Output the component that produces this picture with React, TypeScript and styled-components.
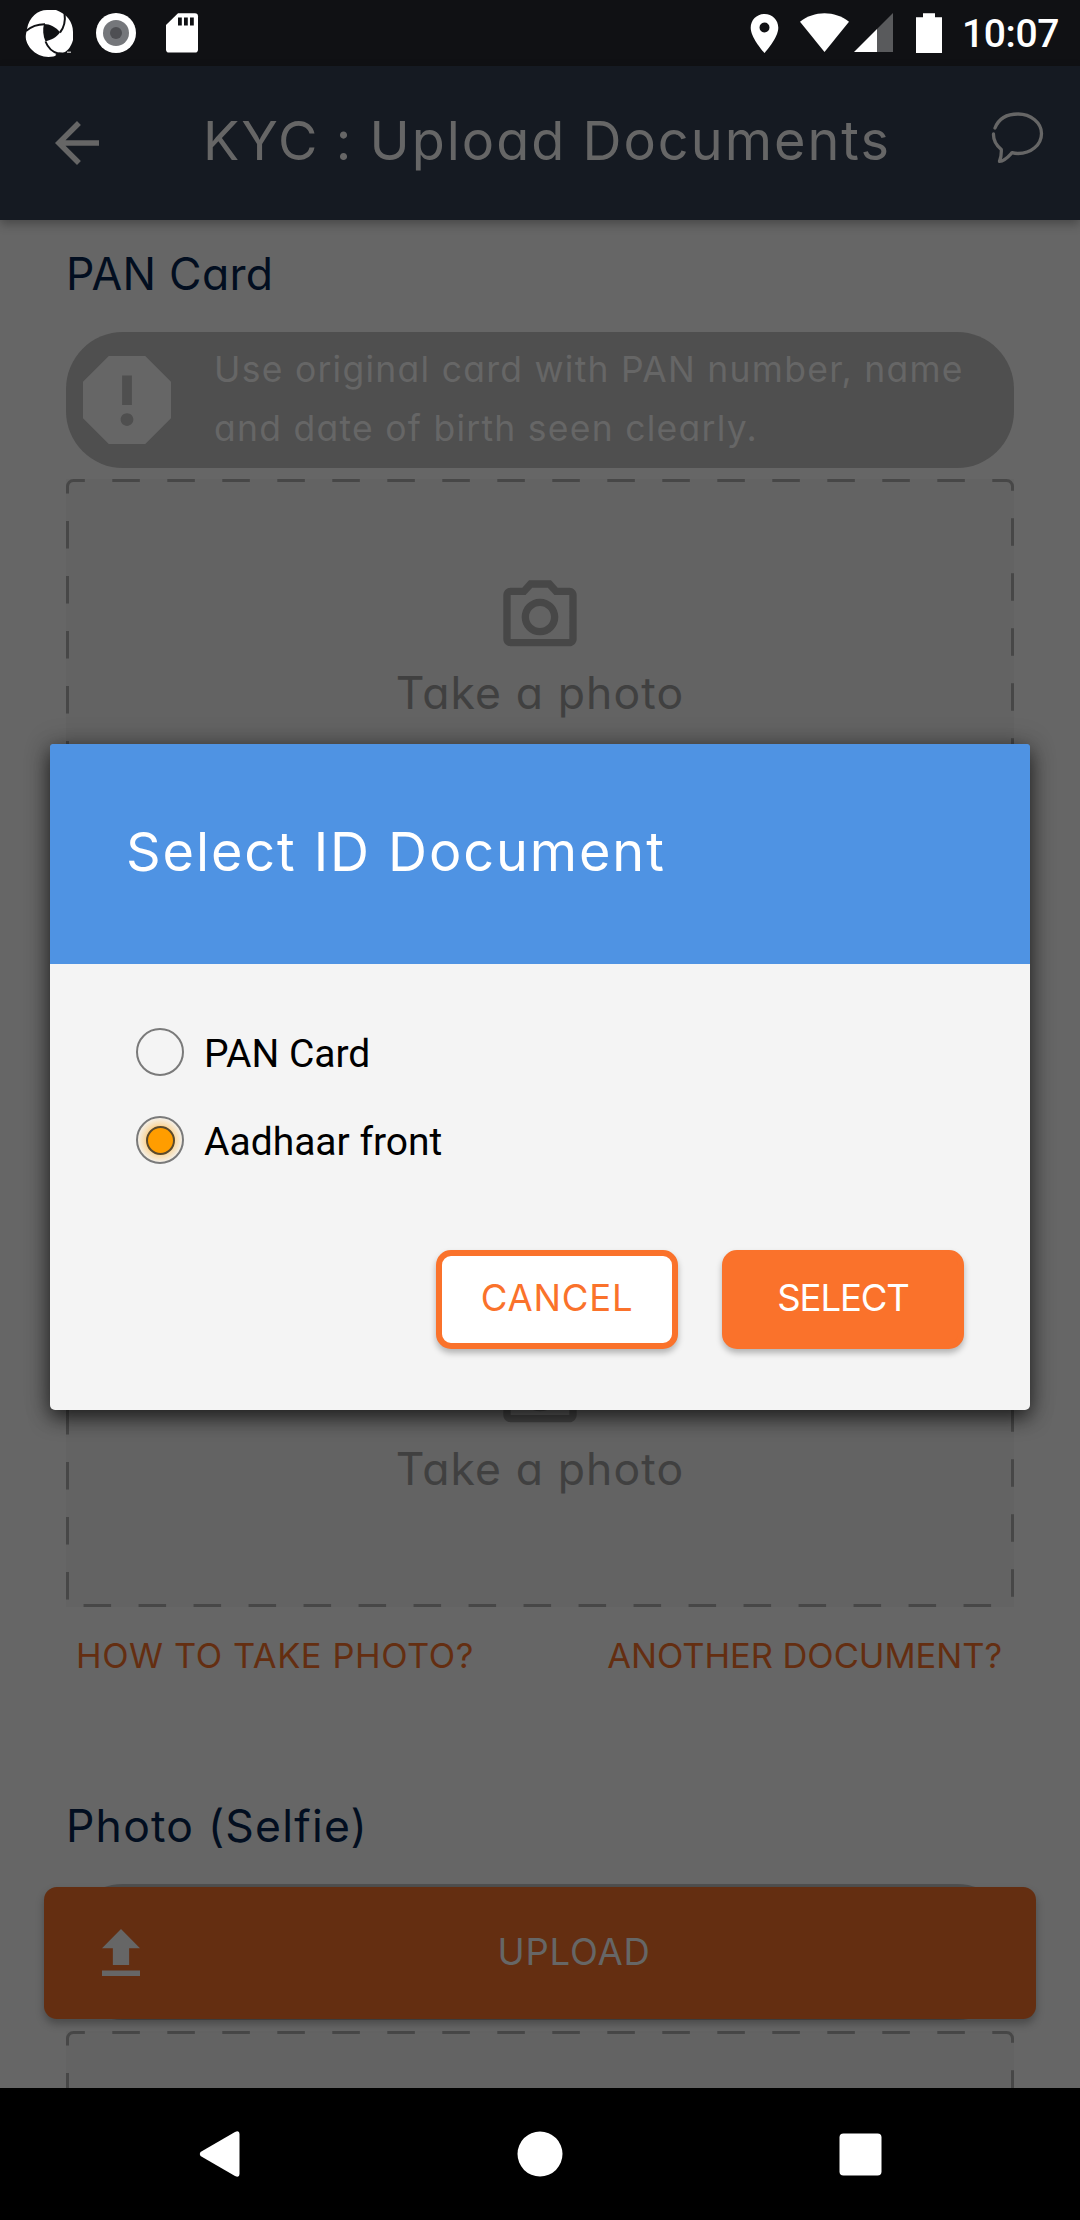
import React from 'react';
import styled, { createGlobalStyle } from 'styled-components';
import { MdArrowBack } from 'react-icons/md';

const GlobalStyle = createGlobalStyle`
  *, *::before, *::after { box-sizing: border-box; }
  body { margin: 0; background: #000; }
  h1, h2, p { margin: 0; font-weight: 400; }
  button { margin: 0; padding: 0; border: 0; background: none; font: inherit; }
  svg { display: block; flex: none; }
`;

const Screen = styled.div`
  position: relative;
  display: flex;
  flex-direction: column;
  width: 1080px;
  height: 2220px;
  overflow: hidden;
  background: #666;
  color: #666;
  font-family: Inter, 'Open Sans', sans-serif;
  font-feature-settings: 'cv11';
  white-space: nowrap;
`;

const StatusBar = styled.div`
  flex: none;
  display: flex;
  justify-content: space-between;
  align-items: flex-start;
  height: 66px;
  padding: 0 21px 0 24px;
  background: #101114;
`;

const StatusGroup = styled.div`
  display: flex;
  align-items: flex-start;
`;

const Clock = styled.span`
  padding-left: 19px;
  font-family: Roboto, sans-serif;
  font-size: 39px;
  font-weight: 500;
  line-height: 69px;
  letter-spacing: -0.4px;
  color: #fff;
`;

const AppBar = styled.header`
  position: relative;
  z-index: 1;
  flex: none;
  display: flex;
  align-items: center;
  height: 154px;
  padding: 0 35px 0 55px;
  background: #151a22;
  box-shadow: 0 4px 10px rgba(0, 0, 0, 0.3);
`;

const AppTitle = styled.h1`
  flex: 1;
  padding: 0 0 5px 104px;
  font-size: 54px;
  line-height: 70px;
  letter-spacing: 2px;
  word-spacing: -1px;
`;

const ChatButton = styled.button`
  align-self: flex-start;
  padding-top: 42px;
  color: #666;
`;

const Content = styled.main`
  flex: 1;
  min-height: 0;
  overflow: hidden;
  padding: 0 66px;
`;

const Section = styled.section`
  display: flex;
  flex-direction: column;
  height: 776px;
`;

const SectionTitle = styled.h2<{ $tracking: number }>`
  flex: none;
  height: 112px;
  padding-top: 24px;
  font-size: 44.5px;
  line-height: 60px;
  letter-spacing: ${p => p.$tracking}px;
  color: #020e20;
`;

const Hint = styled.div`
  flex: none;
  display: flex;
  align-items: center;
  gap: 43px;
  height: 136px;
  padding-left: 17px;
  border-radius: 57px;
  background: #4f4f4f;
`;

const HintText = styled.p`
  padding-bottom: 3px;
  font-size: 35.5px;
  line-height: 59px;
  letter-spacing: 1.26px;
`;

const CaptureBox = styled.div`
  position: relative;
  flex: none;
  display: flex;
  flex-direction: column;
  align-items: center;
  gap: 2px;
  height: 352px;
  margin-top: 11px;
  padding-top: 94px;
  background: #636363;
  color: #404040;
`;

const DashedFrame = styled.svg`
  position: absolute;
  inset: 0;
`;

const CaptureLabel = styled.span`
  font-size: 44.5px;
  line-height: 60px;
  letter-spacing: 1.1px;
`;

const LinkRow = styled.div`
  display: flex;
  justify-content: space-between;
  padding: 19px 12px 0 10px;
`;

const LinkButton = styled.button<{ $tracking: number }>`
  font-size: 34.5px;
  line-height: 60px;
  letter-spacing: ${p => p.$tracking}px;
  color: #642e11;
`;

const UploadButton = styled.button`
  position: absolute;
  left: 44px;
  right: 44px;
  bottom: 201px;
  display: flex;
  align-items: center;
  height: 132px;
  padding: 0 28px 2px 58px;
  border-radius: 13px;
  background: #642e11;
  color: #666;
  box-shadow: 0 5px 8px rgba(0, 0, 0, 0.28);
`;

const UploadLabel = styled.span`
  flex: 1;
  text-align: center;
  font-size: 36.5px;
  line-height: 60px;
  letter-spacing: 0.8px;
`;

const NavBar = styled.nav`
  flex: none;
  display: grid;
  grid-template-columns: repeat(3, 320px);
  justify-content: center;
  align-items: center;
  justify-items: center;
  height: 132px;
  background: #000;
`;

const Dialog = styled.div`
  position: absolute;
  left: 50px;
  right: 50px;
  top: 744px;
  z-index: 2;
  display: flex;
  flex-direction: column;
  height: 666px;
  border-radius: 5px;
  background: #f4f4f4;
  box-shadow: 0 8px 20px rgba(0, 0, 0, 0.62), 0 0 26px rgba(0, 0, 0, 0.25);
`;

const DialogHeader = styled.div`
  display: flex;
  align-items: center;
  height: 220px;
  padding: 0 76px 5px;
  border-radius: 3px 3px 0 0;
  background: #4f93e3;
  color: #fff;
`;

const DialogTitle = styled.h2`
  font-size: 54px;
  line-height: 70px;
  letter-spacing: 1.9px;
`;

const Options = styled.div`
  display: flex;
  flex-direction: column;
  padding: 44px 86px 0;
`;

const Option = styled.div`
  display: flex;
  align-items: center;
  gap: 20px;
  height: 88px;
`;

const Radio = styled.span<{ $checked?: boolean }>`
  display: grid;
  place-items: center;
  width: 48px;
  height: 48px;
  border: 2px solid #7a7a7a;
  border-radius: 50%;
  background: ${p => (p.$checked ? 'radial-gradient(circle closest-side, #ffc877 55%, #f8dcae 72%, #f4efe6 100%)' : 'transparent')};
`;

const RadioDot = styled.span`
  width: 29px;
  height: 29px;
  border: 2px solid #5b4a2c;
  border-radius: 50%;
  background: #ff9d00;
`;

const OptionLabel = styled.span`
  padding-top: 3px;
  font-family: Roboto, sans-serif;
  font-size: 39px;
  line-height: 50px;
  color: #000;
`;

const Actions = styled.div`
  display: flex;
  justify-content: flex-end;
  gap: 44px;
  padding: 66px 66px 0;
`;

const ActionButton = styled.button<{ $filled?: boolean; $tracking: number }>`
  width: 242px;
  height: 99px;
  padding-bottom: 3px;
  border: 6px solid #fa722b;
  border-radius: 15px;
  background: ${p => (p.$filled ? '#fa722b' : '#fff')};
  color: ${p => (p.$filled ? '#fff' : '#fa722b')};
  font-size: 36.5px;
  letter-spacing: ${p => p.$tracking}px;
  box-shadow: 0 4px 6px rgba(0, 0, 0, 0.27);
`;

function SwirlLogo() {
  return (
    <svg width="52" height="66" viewBox="24 0 52 66">
      <path d="M27 29C29 17 38 10 47 10H56C67 14 73 22 73 32V40C71 47 68 50 65 52L58 55C49 59 38 57 31 49C27 44 25 39 26 34Z" fill="#fff" />
      <path d="M44 24C50 24 56 27 60 32.500C57 37 51 40 45.500 41.500C43 36 42.500 29 44 24Z" fill="#101114" />
      <g fill="none" stroke="#101114">
        <path d="M26 31C32 26 38 24.200 45 24.300" strokeWidth="2" />
        <path d="M64.500 13C65.500 20 64.500 27 60 32.500" strokeWidth="2" />
        <path d="M45.500 41.500C48 48 53 52 58 53.500" strokeWidth="2" />
        <path d="M56 56L59 53.500L65 54" strokeWidth="2.400" />
      </g>
      <path d="M67 51.500H71V53H67Z" fill="#aaa" />
    </svg>
  );
}

function RecordIcon() {
  return (
    <svg width="88" height="66" viewBox="76 0 88 66">
      <circle cx="116" cy="33" r="20" fill="#fff" />
      <circle cx="116" cy="33" r="13" fill="#75777b" />
      <circle cx="116" cy="33" r="6" fill="#4e4f53" />
    </svg>
  );
}

function SdCardIcon() {
  return (
    <svg width="40" height="66" viewBox="164 0 40 66">
      <path d="M178 13.200H195Q198 13.200 198 16.200V49.500Q198 52.600 195 52.600H169Q166 52.600 166 49.500V25Z" fill="#fff" />
      <path d="M178 17.500h3.800v8h-3.800zM184 17.500h3.800v8h-3.800zM190 17.500h3.800v8h-3.800z" fill="#101114" />
    </svg>
  );
}

function SystemIcons() {
  return (
    <svg width="194" height="66" viewBox="748 0 194 66">
      <g fill="#fff">
        <path fillRule="evenodd" d="M763.500 14C755.800 14 749.700 20 749.700 27.700C749.700 38 763.500 53 763.500 53S777.300 38 777.300 27.700C777.300 20 771.200 14 763.500 14ZM763.500 22.500a5 5 0 1 1 0 10a5 5 0 0 1 0-10Z" />
        <path d="M799 21.800C813 10.300 834 10.300 848 21.800L823.500 52Z" />
        <path d="M853 52L876 29V52Z" />
        <path d="M922 13.300H934V17.300H941V53H915V17.300H922Z" />
      </g>
      <path d="M876 29L892 13V52H876Z" fill="#595a5c" />
    </svg>
  );
}

function ChatIcon() {
  return (
    <svg width="56" height="58" viewBox="0 0 56 58" fill="none" stroke="currentColor" strokeWidth="3.300" strokeLinecap="round" strokeLinejoin="round">
      <path d="M6 20C10 10 19 6 29 6C42 6 52.500 15 52.500 25.500C52.500 37 42 45.500 29 45.500Q26 45.500 23 44.700C20 48 16 53 10.500 53.300C12 50 12.500 46 12.300 41.500C7 37 4.300 31 4.500 26" />
    </svg>
  );
}

function AlertIcon() {
  return (
    <svg width="88" height="88" viewBox="3 3 18 18" fill="#666">
      <path d="M15.730 3H8.270L3 8.270v7.460L8.270 21h7.460L21 15.730V8.270L15.730 3zM12 17.300c-.720 0-1.300-.580-1.300-1.300 0-.720.580-1.300 1.300-1.300.720 0 1.300.580 1.300 1.300 0 .720-.580 1.300-1.300 1.300zm1-4.300h-2V7h2v6z" />
    </svg>
  );
}

function CameraIcon() {
  return (
    <svg width="88" height="88" viewBox="0 0 24 24" fill="#474747">
      <path d="M14.120 4l1.830 2H20v12H4V6h4.050l1.830-2h4.240M15 2H9L7.170 4H4c-1.100 0-2 .900-2 2v12c0 1.100.900 2 2 2h16c1.100 0 2-.900 2-2V6c0-1.100-.900-2-2-2h-3.170L15 2zm-3 7c1.650 0 3 1.350 3 3s-1.350 3-3 3-3-1.350-3-3 1.350-3 3-3m0-2c-2.760 0-5 2.240-5 5s2.240 5 5 5 5-2.240 5-5-2.240-5-5-5z" />
    </svg>
  );
}

function Capture({ children }: { children?: React.ReactNode }) {
  return (
    <CaptureBox>
      <DashedFrame width="948" height="352" viewBox="0 0 948 352" fill="none" stroke="#474747" strokeWidth="3" strokeDasharray="27.500 27.500">
        <path d="M1.500 344.500V7.500A6 6 0 0 1 7.500 1.500H940.500A6 6 0 0 1 946.500 7.500V344.500A6 6 0 0 1 940.500 350.500H7.500" />
      </DashedFrame>
      {children}
    </CaptureBox>
  );
}

interface DocumentSectionProps {
  title?: string;
  tracking?: number;
  hint?: React.ReactNode;
  prompt?: string;
  links?: boolean;
}

function DocumentSection({ title, tracking = 0, hint, prompt, links }: DocumentSectionProps) {
  return (
    <Section>
      <SectionTitle $tracking={tracking}>{title}</SectionTitle>
      <Hint>
        {hint && <AlertIcon />}
        {hint && <HintText>{hint}</HintText>}
      </Hint>
      <Capture>
        {prompt && <CameraIcon />}
        {prompt && <CaptureLabel>{prompt}</CaptureLabel>}
      </Capture>
      {links && (
        <LinkRow>
          <LinkButton $tracking={0.55}>HOW TO TAKE PHOTO?</LinkButton>
          <LinkButton $tracking={-0.05}>ANOTHER DOCUMENT?</LinkButton>
        </LinkRow>
      )}
    </Section>
  );
}

export default function App() {
  return (
    <Screen>
      <GlobalStyle />
      <StatusBar>
        <StatusGroup>
          <SwirlLogo />
          <RecordIcon />
          <SdCardIcon />
        </StatusGroup>
        <StatusGroup>
          <SystemIcons />
          <Clock>10:07</Clock>
        </StatusGroup>
      </StatusBar>
      <AppBar>
        <MdArrowBack size={44} viewBox="4 4 16 16" />
        <AppTitle>KYC : Upload Documents</AppTitle>
        <ChatButton>
          <ChatIcon />
        </ChatButton>
      </AppBar>
      <Content>
        <DocumentSection
          title="PAN Card"
          tracking={0.3}
          hint={<>Use original card with PAN number, name<br />and date of birth seen clearly.</>}
          prompt="Take a photo"
        />
        <DocumentSection prompt="Take a photo" links />
        <DocumentSection title="Photo (Selfie)" tracking={1.2} />
      </Content>
      <UploadButton>
        <svg width="38" height="47" viewBox="5 3 14 17" preserveAspectRatio="none" fill="currentColor">
          <path d="M9 16h6v-6h4l-7-7-7 7h4zm-4 2h14v2H5z" />
        </svg>
        <UploadLabel>UPLOAD</UploadLabel>
      </UploadButton>
      <NavBar>
        <svg width="42" height="48" viewBox="0 0 42 48" fill="#fff">
          <path d="M1.500 22Q0 24 1.500 26L36 46Q40.500 48 40.500 44V4Q40.500 0 36 2Z" />
        </svg>
        <svg width="46" height="46" viewBox="0 0 46 46" fill="#fff">
          <circle cx="23" cy="23" r="22.500" />
        </svg>
        <svg width="43" height="43" viewBox="0 0 43 43" fill="#fff">
          <rect x="0.500" y="0.500" width="42" height="42" rx="4" />
        </svg>
      </NavBar>
      <Dialog role="dialog">
        <DialogHeader>
          <DialogTitle>Select ID Document</DialogTitle>
        </DialogHeader>
        <Options>
          <Option>
            <Radio />
            <OptionLabel>PAN Card</OptionLabel>
          </Option>
          <Option>
            <Radio $checked>
              <RadioDot />
            </Radio>
            <OptionLabel>Aadhaar front</OptionLabel>
          </Option>
        </Options>
        <Actions>
          <ActionButton $tracking={0.8}>CANCEL</ActionButton>
          <ActionButton $filled $tracking={-1.1}>SELECT</ActionButton>
        </Actions>
      </Dialog>
    </Screen>
  );
}
